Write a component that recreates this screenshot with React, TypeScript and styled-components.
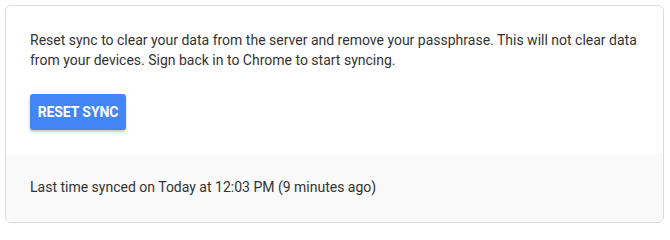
import React from "react";
import styled, { createGlobalStyle } from "styled-components";

const Global = createGlobalStyle`
  html, body { margin: 0; padding: 0; background: #ffffff; }
  body { font-family: Roboto, "Liberation Sans", Arial, sans-serif; }
`;

const Page = styled.div`
  padding: 5px 6px 0 5px;
`;

const Card = styled.section`
  width: 659px;
  box-sizing: border-box;
  border: 1px solid #dadce0;
  border-radius: 6px;
  overflow: hidden;
  background: #ffffff;
`;

const Body = styled.div`
  padding: 24px 24px 24px 24px;
  display: flex;
  flex-direction: column;
  align-items: flex-start;
  gap: 24px;
`;

const Text = styled.p`
  margin: 0;
  font-size: 14px;
  line-height: 20px;
  color: #333333;
  white-space: nowrap;
`;

const Button = styled.button`
  height: 36px;
  width: 96px;
  padding: 0;
  border: none;
  border-radius: 3px;
  background: #4285f4;
  color: #ffffff;
  font-family: Roboto, "Liberation Sans", Arial, sans-serif;
  font-weight: 700;
  font-size: 14px;
  letter-spacing: -0.1px;
  box-shadow: 0 2px 3px rgba(0, 0, 0, 0.22);
  cursor: pointer;
`;

const Footer = styled.div`
  background: #f9f9f9;
  padding: 23px 24px 25px 24px;
`;

export default function App() {
  return (
    <>
      <Global />
      <Page>
        <Card>
          <Body>
            <Text>
              Reset sync to clear your data from the server and remove your passphrase. This will not clear data
              <br />
              from your devices. Sign back in to Chrome to start syncing.
            </Text>
            <Button>RESET SYNC</Button>
          </Body>
          <Footer>
            <Text>Last time synced on Today at 12:03 PM (9 minutes ago)</Text>
          </Footer>
        </Card>
      </Page>
    </>
  );
}
